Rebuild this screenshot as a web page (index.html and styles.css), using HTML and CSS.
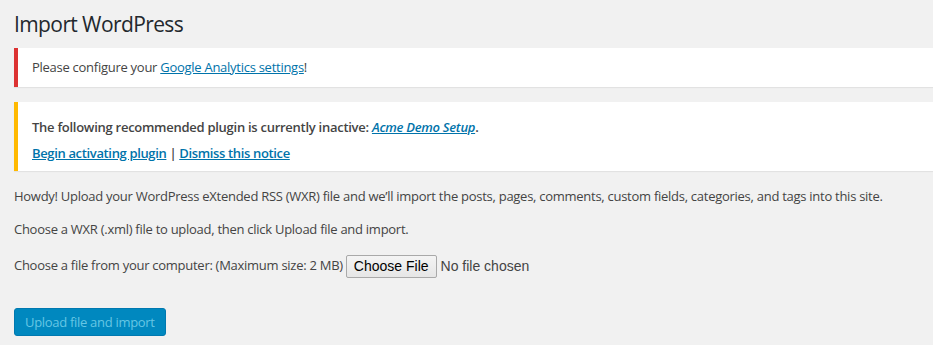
FILE: index.html
```html
<!DOCTYPE html>
<html lang="en">
<head>
    <meta charset="UTF-8">
    <meta name="viewport" content="width=device-width, initial-scale=1.0">
    <title>Import WordPress</title>
    <link rel="stylesheet" href="styles.css">
</head>
<body>
    <div class="wrap">
        <h1>Import WordPress</h1>

        <div class="notice notice-error">
            <p>Please configure your <a href="#">Google Analytics settings</a>!</p>
        </div>

        <div class="notice notice-warning">
            <p><strong>The following recommended plugin is currently inactive: <em><a href="#">Acme Demo Setup</a></em>.</strong></p>
            <p><strong><a href="#">Begin activating plugin</a> | <a href="#">Dismiss this notice</a></strong></p>
        </div>

        <div class="narrow">
            <p>Howdy! Upload your WordPress eXtended RSS (WXR) file and we&#8217;ll import the posts, pages, comments, custom fields, categories, and tags into this site.</p>
            <p>Choose a WXR (.xml) file to upload, then click Upload file and import.</p>
            <form class="upload-form">
                <p class="file-row">
                    <label for="upload">Choose a file from your computer:</label>
                    <span class="max-size">(Maximum size: 2 MB)</span>
                    <span class="file-input">
                        <span class="file-btn">Choose File</span>
                        <span class="file-name">No file chosen</span>
                    </span>
                </p>
                <p class="submit">
                    <button type="button" class="button-primary" disabled>Upload file and import</button>
                </p>
            </form>
        </div>
    </div>
</body>
</html>
```

FILE: styles.css
```css
body {
    margin: 0;
    padding: 0;
    background-color: #f1f1f1;
    color: #444;
    font-family: "Open Sans", "Noto Sans", sans-serif;
    font-size: 13px;
    line-height: 1.5;
    letter-spacing: -0.27px;
}

.wrap {
    margin: 0 0 0 14px;
    padding-top: 1px;
}

h1 {
    font-size: 21px;
    font-weight: 400;
    line-height: 31px;
    color: #23282d;
    margin: 0;
    padding: 8px 0 3px;
    letter-spacing: -0.6px;
}

a {
    color: #0073aa;
}

p {
    margin: 13px 0;
}

.notice {
    background: #fff;
    border-left: 4px solid #fff;
    box-shadow: 0 1px 1px rgba(0, 0, 0, 0.06);
    margin: 5px 0 15px;
    padding: 1px 14px;
}

.notice p {
    margin: 6.5px 0;
    padding: 2px 0;
}

.notice strong {
    font-weight: 600;
}

.notice-error {
    border-left-color: #dc3232;
}

.notice-warning {
    border-left-color: #ffb900;
    padding: 16px 14px 8px;
    margin-bottom: 16px;
}

.notice-warning p {
    margin: 0;
    padding: 0;
}

.notice-warning p + p {
    margin-top: 6.5px;
    letter-spacing: -0.35px;
}

.file-row {
    display: flex;
    align-items: center;
    gap: 3px;
    min-height: 28px;
    white-space: nowrap;
}

.file-input {
    display: inline-flex;
    align-items: center;
    gap: 4px;
    font-family: "Liberation Sans", Arial, sans-serif;
    font-size: 14px;
    color: #333;
    letter-spacing: 0;
}

.file-btn {
    border: 1px solid #a9a9a9;
    border-radius: 2px;
    background: linear-gradient(#f4f4f4, #e6e6e6);
    color: #000;
    padding: 2px 7px;
    line-height: 17px;
}

.file-name {
    color: #444;
}

.submit {
    margin-top: 18px;
    padding-top: 10px;
}

.button-primary {
    font-family: inherit;
    font-size: 13px;
    letter-spacing: -0.3px;
    height: 28px;
    line-height: 26px;
    padding: 0 10px 1px;
    background: #0088bf;
    border: 1px solid #0079b0;
    border-radius: 3px;
    color: #66c6e4;
    cursor: default;
}
```
